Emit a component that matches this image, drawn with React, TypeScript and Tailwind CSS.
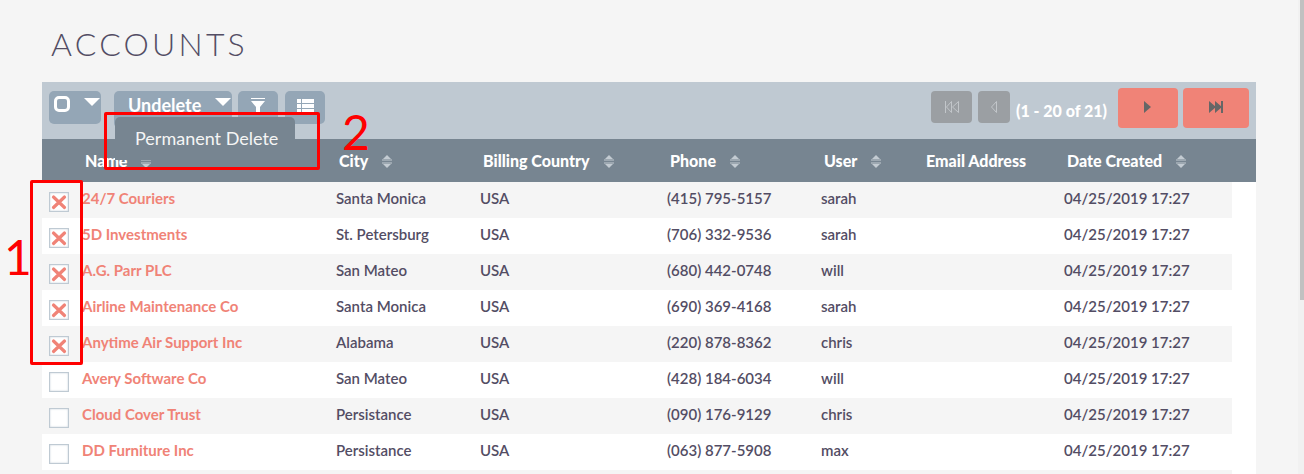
import clsx from "clsx";

interface Account {
  name: string;
  city: string;
  phone: string;
  user: string;
  checked: boolean;
}

interface Column {
  label: string;
  width: string;
  sortable: boolean;
}

const columns: Column[] = [
  { label: "Name", width: "", sortable: true },
  { label: "City", width: "w-[144px]", sortable: true },
  { label: "Billing Country", width: "w-[187px]", sortable: true },
  { label: "Phone", width: "w-[154px]", sortable: true },
  { label: "User", width: "w-[102px]", sortable: true },
  { label: "Email Address", width: "w-[141px]", sortable: false },
  { label: "Date Created", width: "w-[174px]", sortable: true },
];

const accounts: Account[] = [
  { name: "24/7 Couriers", city: "Santa Monica", phone: "(415) 795-5157", user: "sarah", checked: true },
  { name: "5D Investments", city: "St. Petersburg", phone: "(706) 332-9536", user: "sarah", checked: true },
  { name: "A.G. Parr PLC", city: "San Mateo", phone: "(680) 442-0748", user: "will", checked: true },
  { name: "Airline Maintenance Co", city: "Santa Monica", phone: "(690) 369-4168", user: "sarah", checked: true },
  { name: "Anytime Air Support Inc", city: "Alabama", phone: "(220) 878-8362", user: "chris", checked: true },
  { name: "Avery Software Co", city: "San Mateo", phone: "(428) 184-6034", user: "will", checked: false },
  { name: "Cloud Cover Trust", city: "Persistance", phone: "(090) 176-9129", user: "chris", checked: false },
  { name: "DD Furniture Inc", city: "Persistance", phone: "(063) 877-5908", user: "max", checked: false },
];

const SortIcon = () => (
  <svg width="10" height="13" viewBox="0 0 10 13" fill="#c3cbd2" className="mt-0.5" aria-hidden="true">
    <path d="M5 0L9 4H1zM0 4.500h10v1H0zM0 7.500h10v1H0zM1 9h8L5 13z" />
  </svg>
);

const CaretDown = () => (
  <svg width="18" height="9" viewBox="0 0 18 9" fill="#fff" aria-hidden="true">
    <path d="M1 0h16L9 8z" />
  </svg>
);

const Toolbar = () => (
  <div className="flex items-start justify-between bg-[#bfc9d2] h-[57px] px-[7px]">
    <div className="flex items-start pt-[9px]">
      <button
        type="button"
        aria-label="Select"
        className="flex items-start justify-between w-[52px] h-[33px] pl-[5px] pt-[5px] rounded-[5px] bg-[#94a6b6]"
      >
        <span className="size-4 rounded-[5px] border-3 border-white" />
        <span className="pt-0.5">
          <CaretDown />
        </span>
      </button>
      <div className="relative ml-[13px]">
        <button
          type="button"
          className="flex items-start justify-between w-[118px] h-[37px] pl-[14px] pt-0.5 rounded-[5px] bg-[#94a6b6] text-white text-lg leading-6 font-bold"
        >
          Undelete
          <span className="pt-[5px]">
            <CaretDown />
          </span>
        </button>
        <a
          href="#permanent-delete"
          className="absolute left-px top-[26px] z-10 w-[180px] h-[43px] pl-5 rounded-t-[5px] bg-[#778591] text-[#f5f5f5] text-lg leading-[43px] whitespace-nowrap"
        >
          Permanent Delete
        </a>
      </div>
      <button
        type="button"
        aria-label="Filter"
        className="flex justify-center items-start w-10 h-[33px] ml-[6px] pt-[7px] rounded-[5px] bg-[#94a6b6]"
      >
        <svg width="14" height="16" viewBox="0 0 14 16" fill="#fff">
          <path d="M0 0h14v1H0zM0 3h14L9 9v7H5V9z" />
        </svg>
      </button>
      <button
        type="button"
        aria-label="Columns"
        className="flex justify-center items-start w-10 h-[33px] ml-[7px] pt-2 rounded-[5px] bg-[#94a6b6]"
      >
        <svg width="17" height="14" viewBox="0 0 17 14" fill="#fff">
          <path d="M0 0h4v4H0zM5 0h12v4H5zM0 5h4v4H0zM5 5h12v4H5zM0 10h4v4H0zM5 10h12v4H5z" />
        </svg>
      </button>
    </div>

    <div className="flex items-start pt-[6px]">
      <button
        type="button"
        disabled
        aria-label="First page"
        className="flex justify-center items-center w-[41px] h-8 mt-[3px] rounded-sm bg-[#9b9fa3]"
      >
        <svg width="16" height="14" viewBox="0 0 16 14" fill="none" stroke="#c2c6ca">
          <path d="M1.5 1v12M7.5 1.500L2.500 7L7.500 12.500zM14.500 1.500L8.500 7L14.500 12.500z" />
        </svg>
      </button>
      <button
        type="button"
        disabled
        aria-label="Previous page"
        className="flex justify-center items-center w-8 h-8 mt-[3px] ml-[6px] rounded-sm bg-[#9b9fa3]"
      >
        <svg width="8" height="14" viewBox="0 0 8 14" fill="none" stroke="#c2c6ca">
          <path d="M6.500 1.500L1.500 7L6.500 12.500z" />
        </svg>
      </button>
      <span className="w-[108px] pt-[11px] pl-[6px] text-white text-base leading-6 font-black whitespace-nowrap">
        (1 - 20 of 21)
      </span>
      <button
        type="button"
        aria-label="Next page"
        className="flex justify-center w-[60px] h-10 pt-[13px] rounded-sm bg-[#f08377]"
      >
        <svg width="8" height="12" viewBox="0 0 8 12" fill="#666">
          <path d="M0 0l7 6l-7 6z" />
        </svg>
      </button>
      <button
        type="button"
        aria-label="Last page"
        className="flex justify-center w-[66px] h-10 pt-[13px] ml-[5px] rounded-sm bg-[#f08377]"
      >
        <svg width="15" height="12" viewBox="0 0 15 12" fill="#666">
          <path d="M0 0l7 6l-7 6zM6 0l7 6l-7 6zM12 0h2v12h-2z" />
        </svg>
      </button>
    </div>
  </div>
);

const AccountRow = ({ account }: { account: Account }) => (
  <tr className="group h-9 align-top text-[15px] leading-5 text-[#534d64] font-semibold">
    <td className="pl-[7px] pt-[10px] group-odd:bg-[#f5f5f5]">
      <input
        type="checkbox"
        defaultChecked={account.checked}
        aria-label={account.name}
        className="peer absolute size-5 opacity-0"
      />
      <span className="block size-5 border border-[#bfcad3] bg-white shadow-[inset_0_0_2px_#bfcad3] peer-checked:[&>svg]:block">
        <svg
          className="hidden"
          width="18"
          height="18"
          viewBox="0 0 18 18"
          stroke="#f08377"
          strokeWidth="3.2"
          strokeLinecap="round"
        >
          <path d="M3.500 4l11 10.500M14.500 4L3.500 14.500" />
        </svg>
      </span>
    </td>
    <td className="px-[6px] pt-[6px] group-odd:bg-[#f5f5f5]">
      <a href="#account" className="text-[#f08377] font-bold">
        {account.name}
      </a>
    </td>
    <td className="px-[6px] pt-[6px] group-odd:bg-[#f5f5f5]">{account.city}</td>
    <td className="px-[6px] pt-[6px] group-odd:bg-[#f5f5f5]">USA</td>
    <td className="px-[6px] pt-[6px] group-odd:bg-[#f5f5f5]">{account.phone}</td>
    <td className="px-[6px] pt-[6px] group-odd:bg-[#f5f5f5]">{account.user}</td>
    <td className="px-[6px] pt-[6px] group-odd:bg-[#f5f5f5]" />
    <td className="px-[6px] pt-[6px] group-odd:bg-[#f5f5f5] whitespace-nowrap">04/25/2019 17:27</td>
    <td />
  </tr>
);

const App = () => {
  return (
    <div className="relative min-h-screen overflow-hidden bg-[#f5f5f5] pl-[42px] pr-12 font-[Lato,sans-serif]">
      <h1 className="pl-[9px] pt-6 pb-[18px] text-[32px] leading-10 font-light tracking-widest text-[#534d64]">
        ACCOUNTS
      </h1>

      <div className="bg-white">
        <Toolbar />
        <table className="w-full table-fixed border-collapse">
          <thead>
            <tr className="h-[43px] bg-[#778591] text-left text-white text-base leading-6 font-black">
              <th className="w-[34px]" aria-label="Selected" />
              {columns.map((column) => (
                <th key={column.label} className={clsx("pl-[9px] font-black whitespace-nowrap", column.width)}>
                  <span className="flex items-center gap-[14px]">
                    {column.label}
                    {column.sortable && <SortIcon />}
                  </span>
                </th>
              ))}
              <th className="w-6" aria-label="Actions" />
            </tr>
          </thead>
          <tbody>
            {accounts.map((account) => (
              <AccountRow key={account.name} account={account} />
            ))}
          </tbody>
        </table>
        <div className="h-1 mr-6 bg-[#f5f5f5]" />
      </div>

      {/* step markers */}
      <div className="absolute left-[30px] top-[180px] w-[53px] h-[185px] rounded-xs border-3 border-[#f00]" />
      <div className="absolute left-1 top-[229px] text-5xl leading-[56px] text-[#f00]">1</div>
      <div className="absolute z-20 left-[104px] top-[112px] w-[216px] h-[58px] rounded-xs border-3 border-[#f00]" />
      <div className="absolute left-[342px] top-[104px] text-5xl leading-[56px] text-[#f00]">2</div>

      {/* scroll track */}
      <div className="absolute right-0 inset-y-0 w-[6px] bg-[#f1f1f1]">
        <div className="ml-auto w-1 h-[300px] bg-[#c1c1c1]" />
      </div>
    </div>
  );
};

export default App;
